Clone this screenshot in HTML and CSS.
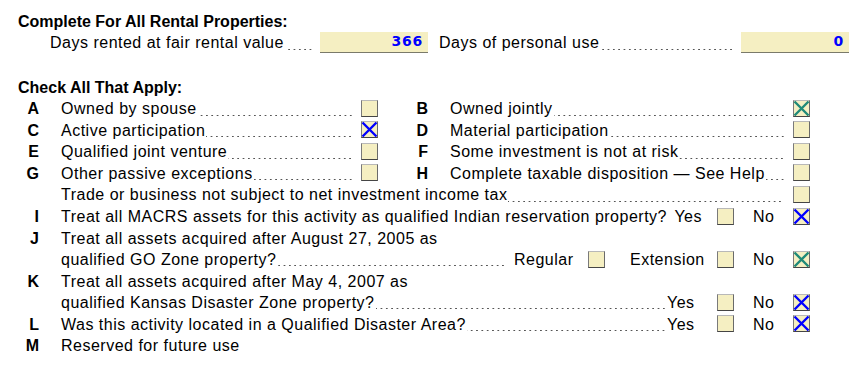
FILE: index.html
```html
<!DOCTYPE html>
<html>
<head>
<meta charset="utf-8">
<link rel="stylesheet" href="styles.css">
</head>
<body>
<div class="form">
  <div class="title">Complete For All Rental Properties:</div>
  <div class="days-row">
    <div class="field field-1">
      <span class="lbl">Days rented at fair rental value</span><span class="leader"></span>
      <span class="numbox">366</span>
    </div>
    <div class="field field-2">
      <span class="lbl">Days of personal use</span><span class="leader"></span>
      <span class="numbox">0</span>
    </div>
  </div>

  <div class="title title-check">Check All That Apply:</div>

  <div class="row">
    <span class="ltr">A</span>
    <div class="half half-l"><span class="lbl">Owned by spouse</span><span class="leader"></span><span class="cb"></span></div>
    <span class="ltr ltr-r">B</span>
    <div class="half half-r"><span class="lbl">Owned jointly</span><span class="leader"></span><span class="cb"><svg viewBox="0 0 17 17"><path d="M1.5 1.5L15.5 15.5M15.5 1.5L1.5 15.5" class="x-teal"/></svg></span></div>
  </div>
  <div class="row">
    <span class="ltr">C</span>
    <div class="half half-l"><span class="lbl">Active participation</span><span class="leader"></span><span class="cb"><svg viewBox="0 0 17 17"><path d="M1.5 1.5L15.5 15.5M15.5 1.5L1.5 15.5" class="x-blue"/></svg></span></div>
    <span class="ltr ltr-r">D</span>
    <div class="half half-r"><span class="lbl">Material participation</span><span class="leader"></span><span class="cb"></span></div>
  </div>
  <div class="row">
    <span class="ltr">E</span>
    <div class="half half-l"><span class="lbl">Qualified joint venture</span><span class="leader"></span><span class="cb"></span></div>
    <span class="ltr ltr-r">F</span>
    <div class="half half-r"><span class="lbl">Some investment is not at risk</span><span class="leader"></span><span class="cb"></span></div>
  </div>
  <div class="row">
    <span class="ltr">G</span>
    <div class="half half-l"><span class="lbl">Other passive exceptions</span><span class="leader"></span><span class="cb"></span></div>
    <span class="ltr ltr-r">H</span>
    <div class="half half-r"><span class="lbl">Complete taxable disposition — See Help</span><span class="leader"></span><span class="cb"></span></div>
  </div>
  <div class="row">
    <span class="ltr"></span>
    <div class="full"><span class="lbl">Trade or business not subject to net investment income tax</span><span class="leader"></span><span class="cb"></span></div>
  </div>
  <div class="row">
    <span class="ltr">I</span>
    <div class="full"><span class="lbl">Treat all MACRS assets for this activity as qualified Indian reservation property?</span><span class="spacer"></span><span class="yes yes-i">Yes</span><span class="cb"></span><span class="no">No</span><span class="cb"><svg viewBox="0 0 17 17"><path d="M1.5 1.5L15.5 15.5M15.5 1.5L1.5 15.5" class="x-blue"/></svg></span></div>
  </div>
  <div class="row">
    <span class="ltr">J</span>
    <div class="full"><span class="lbl">Treat all assets acquired after August 27, 2005 as</span></div>
  </div>
  <div class="row">
    <span class="ltr"></span>
    <div class="full"><span class="lbl">qualified GO Zone property?</span><span class="leader leader-reg"></span><span class="reg">Regular</span><span class="cb"></span><span class="ext">Extension</span><span class="cb"></span><span class="no">No</span><span class="cb"><svg viewBox="0 0 17 17"><path d="M1.5 1.5L15.5 15.5M15.5 1.5L1.5 15.5" class="x-teal"/></svg></span></div>
  </div>
  <div class="row">
    <span class="ltr">K</span>
    <div class="full"><span class="lbl">Treat all assets acquired after May 4, 2007 as</span></div>
  </div>
  <div class="row">
    <span class="ltr"></span>
    <div class="full"><span class="lbl">qualified Kansas Disaster Zone property?</span><span class="leader leader-yes"></span><span class="yes">Yes</span><span class="cb"></span><span class="no">No</span><span class="cb"><svg viewBox="0 0 17 17"><path d="M1.5 1.5L15.5 15.5M15.5 1.5L1.5 15.5" class="x-blue"/></svg></span></div>
  </div>
  <div class="row">
    <span class="ltr">L</span>
    <div class="full"><span class="lbl">Was this activity located in a Qualified Disaster Area?</span><span class="leader leader-yes"></span><span class="yes">Yes</span><span class="cb"></span><span class="no">No</span><span class="cb"><svg viewBox="0 0 17 17"><path d="M1.5 1.5L15.5 15.5M15.5 1.5L1.5 15.5" class="x-blue"/></svg></span></div>
  </div>
  <div class="row">
    <span class="ltr">M</span>
    <div class="full"><span class="lbl">Reserved for future use</span></div>
  </div>
</div>
</body>
</html>
```
FILE: styles.css
```css
html, body {
  margin: 0;
  padding: 0;
  background: #ffffff;
}
body {
  font-family: "Liberation Sans", Arial, sans-serif;
  font-size: 16px;
  color: #000000;
  width: 862px;
  height: 366px;
  overflow: hidden;
}
.form {
  padding-top: 11px;
}
.title {
  font-weight: bold;
  height: 21px;
  line-height: 21px;
  padding-left: 18px;
  white-space: nowrap;
}
.title-check {
  margin-top: 24px;
}
.days-row {
  display: flex;
  height: 21px;
  line-height: 21px;
  padding-left: 50px;
}
.field {
  display: flex;
  align-items: stretch;
}
.field-1 { width: 378px; }
.field-2 { width: 410px; margin-left: 11px; }
.lbl {
  white-space: nowrap;
  letter-spacing: 0.5px;
}
.leader {
  flex: 1;
  min-width: 0;
  margin-right: 8px;
  margin-left: 1px;
  background-image: radial-gradient(circle, #555 0.6px, rgba(0,0,0,0) 0.9px);
  background-size: 5.33px 3px;
  background-repeat: repeat-x;
  background-position: right 0 bottom 3px;
}
.field .leader { margin-right: 7px; background-position: right 0 bottom 2px; }
.numbox {
  width: 108px;
  box-sizing: border-box;
  background: #f5efc2;
  border-bottom: 1px solid #7a7a6a;
  text-align: right;
  padding-right: 5px;
  line-height: 19px;
  font-family: "DejaVu Sans", "Liberation Sans", sans-serif;
  font-weight: bold;
  font-size: 14px;
  letter-spacing: 0.8px;
  color: #0000ff;
}
.row {
  display: flex;
  align-items: center;
  height: 21.55px;
  line-height: 21px;
}
.ltr {
  width: 39px;
  flex: none;
  text-align: right;
  font-weight: bold;
}
.half {
  display: flex;
  align-items: center;
  height: 100%;
}
.half-l { width: 317px; margin-left: 22px; }
.ltr-r { width: 50px; }
.half-r { width: 360px; margin-left: 22px; }
.full {
  display: flex;
  align-items: center;
  height: 100%;
  width: 749px;
  margin-left: 22px;
}
.half .leader, .full .leader {
  align-self: stretch;
}
.full .leader { margin-right: 10px; }
.cb {
  flex: none;
  width: 17px;
  height: 17px;
  box-sizing: border-box;
  background: #f5efc2;
  border-style: solid;
  border-width: 1px;
  border-color: #b8b8b8 #6a6a6a #454545 #7a7a7a;
  position: relative;
  margin-top: -1px;
}
.cb svg {
  position: absolute;
  left: -1px;
  top: -1px;
  width: 17px;
  height: 17px;
}
.x-blue { stroke: #0000ff; stroke-width: 2.4; fill: none; }
.x-teal { stroke: #1f8a78; stroke-width: 2.4; fill: none; }
.spacer { flex: 1; min-width: 6px; }
.yes, .no, .reg, .ext {
  flex: none;
  white-space: nowrap;
  letter-spacing: 0.5px;
}
.yes { width: 50px; }
.yes-i { width: auto; padding-right: 15px; }
.no {
  width: 40px;
  padding-left: 19px;
}
.full .leader-yes { margin-right: 1px; }
.full .leader-reg { margin-right: 8px; }
.reg { width: 74px; }
.ext { width: 87px; padding-left: 25px; }
```
